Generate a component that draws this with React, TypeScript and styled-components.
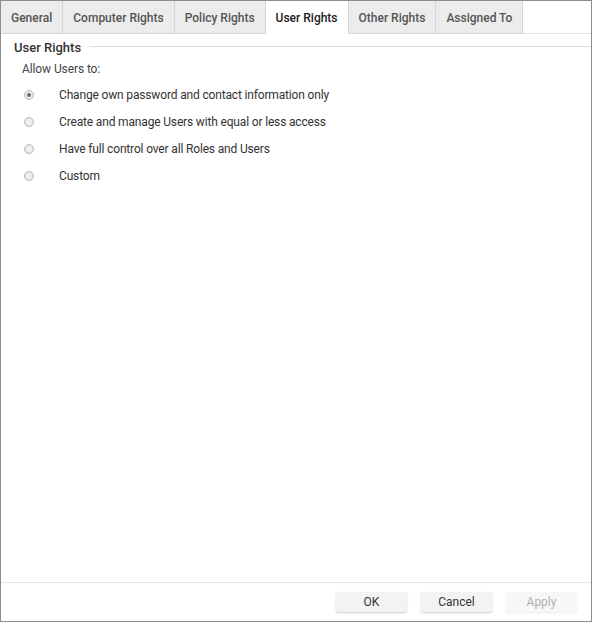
import React, { useState } from 'react'
import styled, { createGlobalStyle } from 'styled-components'

const GlobalStyle = createGlobalStyle`
    html, body {
        margin: 0;
        padding: 0;
        background: #ffffff;
    }
    * {
        box-sizing: border-box;
    }
`

const tabs = ['General', 'Computer Rights', 'Policy Rights', 'User Rights', 'Other Rights', 'Assigned To']

const options = [
    'Change own password and contact information only',
    'Create and manage Users with equal or less access',
    'Have full control over all Roles and Users',
    'Custom',
]

const App = () => {
    const [active, setActive] = useState('User Rights')
    const [choice, setChoice] = useState(0)

    return (
        <>
            <GlobalStyle />
            <Dialog>
                <TabBar>
                    {tabs.map((t) => (
                        <Tab key={t} $active={t === active} onClick={() => setActive(t)}>
                            {t}
                        </Tab>
                    ))}
                    <TabFiller />
                </TabBar>
                <Body>
                    <Legend>
                        <span>User Rights</span>
                        <Rule />
                    </Legend>
                    <Intro>Allow Users to:</Intro>
                    <OptionList>
                        {options.map((o, i) => (
                            <Option key={o} onClick={() => setChoice(i)}>
                                <Radio $checked={i === choice} />
                                <span>{o}</span>
                            </Option>
                        ))}
                    </OptionList>
                </Body>
                <Footer>
                    <Button>OK</Button>
                    <Button>Cancel</Button>
                    <Button disabled>Apply</Button>
                </Footer>
            </Dialog>
        </>
    )
}

const Dialog = styled.div`
    width: 592px;
    height: 622px;
    border: 1px solid #8c8c8c;
    display: flex;
    flex-direction: column;
    font-family: Roboto, 'Liberation Sans', sans-serif;
    color: #333333;
    background: #ffffff;
`

const TabBar = styled.div`
    display: flex;
    height: 33px;
    flex-shrink: 0;
`

const Tab = styled.div<{ $active?: boolean }>`
    display: flex;
    align-items: center;
    padding: 2px 10px 0;
    height: 100%;
    font-size: 12px;
    font-weight: 500;
    color: ${(p) => (p.$active ? '#222222' : '#555555')};
    background: ${(p) => (p.$active ? '#ffffff' : '#ececec')};
    border-right: 1px solid #d6d6d6;
    border-bottom: 1px solid ${(p) => (p.$active ? '#ffffff' : '#d6d6d6')};
    cursor: pointer;
    white-space: nowrap;
`

const TabFiller = styled.div`
    flex: 1;
    border-bottom: 1px solid #e4e4e4;
`

const Body = styled.div`
    flex: 1;
    padding: 5px 0 0 13px;
`

const Legend = styled.div`
    display: flex;
    align-items: center;
    gap: 8px;
    font-size: 13px;
    font-weight: 500;
    color: #333333;
    height: 16px;
`

const Rule = styled.div`
    flex: 1;
    height: 1px;
    margin-top: -1px;
    background: #dddddd;
`

const Intro = styled.div`
    font-size: 12px;
    color: #444444;
    margin: 6px 0 0 8px;
    height: 16px;
    line-height: 16px;
    letter-spacing: -0.1px;
`

const OptionList = styled.div`
    display: flex;
    flex-direction: column;
    margin-top: 4px;
`

const Option = styled.label`
    display: flex;
    align-items: center;
    height: 27px;
    font-size: 12px;
    letter-spacing: -0.16px;
    color: #333333;
    padding-left: 10px;
    cursor: pointer;
`

const Radio = styled.span<{ $checked?: boolean }>`
    width: 10px;
    height: 10px;
    border-radius: 50%;
    border: 1px solid #b8b8b8;
    background: radial-gradient(circle, #f4f4f4 0%, #e2e2e2 100%);
    margin-right: 25px;
    position: relative;
    flex-shrink: 0;
    &::after {
        content: '';
        display: ${(p) => (p.$checked ? 'block' : 'none')};
        position: absolute;
        left: 2px;
        top: 2px;
        width: 4px;
        height: 4px;
        border-radius: 50%;
        background: #6a6a6a;
    }
`

const Footer = styled.div`
    flex-shrink: 0;
    height: 39px;
    border-top: 1px solid #e6e6e6;
    display: flex;
    justify-content: flex-end;
    align-items: center;
    gap: 14px;
    padding: 0 14px 0 0;
`

const Button = styled.button`
    width: 71px;
    height: 20px;
    font-family: Roboto, 'Liberation Sans', sans-serif;
    font-size: 12px;
    color: #333333;
    background: #f3f3f3;
    border: none;
    border-radius: 2px;
    box-shadow: 0 1px 2px rgba(0, 0, 0, 0.2);
    cursor: pointer;
    &:disabled {
        color: #b0b0b0;
        background: #f7f7f7;
        box-shadow: 0 1px 2px rgba(0, 0, 0, 0.08);
        cursor: default;
    }
`

export default App
